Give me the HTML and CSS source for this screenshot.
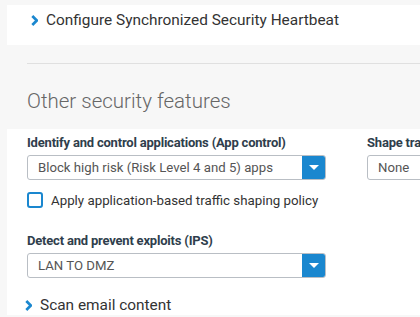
FILE: index.html
```html
<!DOCTYPE html>
<html lang="en">
<head>
    <meta charset="UTF-8">
    <title>Security features</title>
    <link rel="stylesheet" href="styles.css">
</head>
<body>
    <!-- Heartbeat panel -->
    <div class="panel panel-top">
        <div class="expander">
            <svg class="chevron" width="7" height="11" viewBox="0 0 7 11"><path d="M1.3 1 L5.8 5.5 L1.3 10" fill="none" stroke="#1a87cf" stroke-width="2.7"/></svg>
            <span>Configure Synchronized Security Heartbeat</span>
        </div>
    </div>

    <div class="section-head">
        <hr class="divider">
        <h2>Other security features</h2>
    </div>

    <div class="panel panel-main">
        <div class="row">
            <div class="field field-wide">
                <label class="field-label">Identify and control applications (App control)</label>
                <div class="select">
                    <span class="select-value">Block high risk (Risk Level 4 and 5) apps</span>
                    <span class="select-btn"><span class="caret"></span></span>
                </div>
                <label class="check">
                    <span class="check-box"></span>
                    <span>Apply application-based traffic shaping policy</span>
                </label>
            </div>
            <div class="field field-side">
                <label class="field-label">Shape traffic</label>
                <div class="select">
                    <span class="select-value">None</span>
                    <span class="select-btn"><span class="caret"></span></span>
                </div>
            </div>
        </div>

        <div class="field field-wide field-ips">
            <label class="field-label">Detect and prevent exploits (IPS)</label>
            <div class="select">
                <span class="select-value">LAN TO DMZ</span>
                <span class="select-btn"><span class="caret"></span></span>
            </div>
        </div>

        <div class="expander expander-mail">
            <svg class="chevron" width="7" height="11" viewBox="0 0 7 11"><path d="M1.3 1 L5.8 5.5 L1.3 10" fill="none" stroke="#1a87cf" stroke-width="2.7"/></svg>
            <span>Scan email content</span>
        </div>
    </div>
</body>
</html>
```

FILE: styles.css
```css
body {
    margin: 0;
    background-color: #f7f7f7;
    font-family: Roboto, 'Liberation Sans', sans-serif;
    color: #333;
    overflow: hidden;
}

.panel {
    background-color: #fff;
    margin-left: 7px;
}

.panel-top {
    margin-top: 5px;
    height: 40px;
    box-sizing: border-box;
    padding: 5px 0 0 24px;
}

.expander {
    display: flex;
    align-items: center;
    font-size: 15.4px;
    line-height: 20px;
    color: #333;
    white-space: nowrap;
}

.chevron {
    margin-right: 8px;
    flex-shrink: 0;
}

.section-head {
    padding-left: 27px;
}

.divider {
    margin: 18px 0 0;
    border: 0;
    border-top: 1px solid #e0e0e0;
}

h2 {
    margin: 25px 0 0;
    font-size: 20.5px;
    font-weight: 300;
    color: #666;
    line-height: 24px;
}

.panel-main {
    margin-top: 16px;
    padding: 6px 0 0 20px;
    height: 186px;
    box-sizing: border-box;
    overflow: hidden;
}

.row {
    display: flex;
    gap: 41px;
    white-space: nowrap;
}

.field-wide {
    width: 299px;
    flex-shrink: 0;
}

.field-side {
    flex-shrink: 0;
    width: 200px;
}

.field-label {
    display: block;
    font-size: 13px;
    font-weight: 700;
    color: #2f3e4c;
    letter-spacing: -0.2px;
    line-height: 16px;
    margin-bottom: 4px;
}

.select {
    display: flex;
    height: 25px;
    box-sizing: border-box;
    border: 1px solid #b9bec4;
    border-radius: 3px;
    overflow: hidden;
}

.select-value {
    flex-grow: 1;
    padding-left: 10px;
    font-size: 13.2px;
    color: #555;
    line-height: 23px;
}

.select-btn {
    width: 24px;
    margin: -1px -1px -1px 0;
    background-color: #1a87cf;
    display: flex;
    align-items: center;
    justify-content: center;
}

.caret {
    width: 0;
    height: 0;
    border-left: 5px solid transparent;
    border-right: 5px solid transparent;
    border-top: 5px solid #fff;
}

.field-side .select-btn {
    display: none;
}

.check {
    display: flex;
    align-items: center;
    margin-top: 12px;
    font-size: 13.3px;
    color: #333;
}

.check-box {
    width: 12px;
    height: 12px;
    border: 2px solid #1a87cf;
    border-radius: 3px;
    margin-right: 8px;
    flex-shrink: 0;
}

.field-ips {
    margin-top: 25px;
}

.expander-mail {
    margin: 17px 0 0 -2px;
}

.expander-mail .chevron {
    margin-right: 8px;
}
```
